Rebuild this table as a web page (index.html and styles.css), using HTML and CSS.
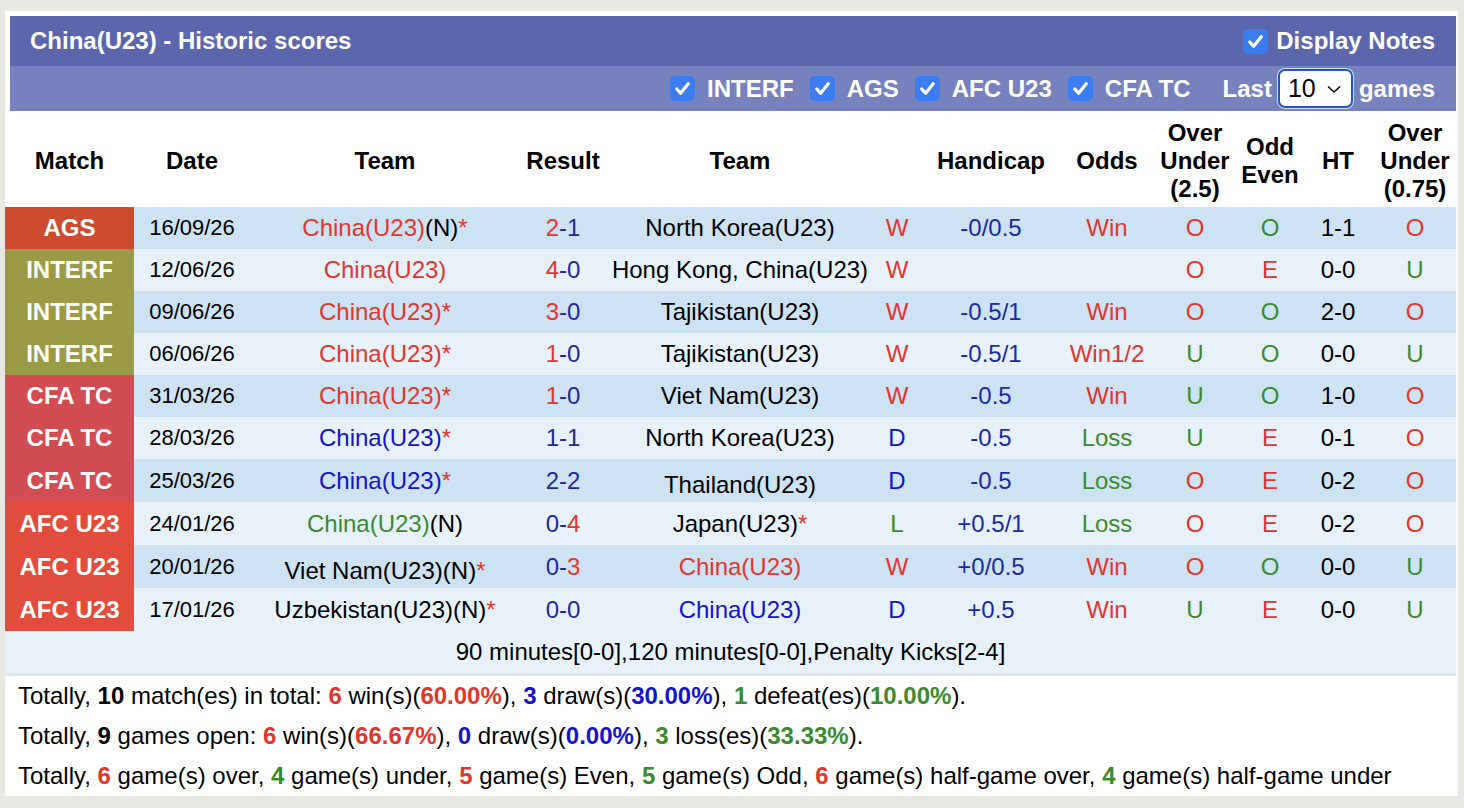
FILE: index.html
```html
<!DOCTYPE html>
<html>
<head>
<meta charset="utf-8">
<link rel="stylesheet" href="styles.css">
</head>
<body>
<div class="frame">
  <div class="titlebar">
    <span class="title">China(U23) - Historic scores</span>
    <label class="opt"><span class="cb"><svg viewBox="0 0 24 24"><path d="M6 12.5l4 4.5 8-10" /></svg></span>Display Notes</label>
  </div>
  <div class="filterbar">
    <label class="opt"><span class="cb"><svg viewBox="0 0 24 24"><path d="M6 12.5l4 4.5 8-10" /></svg></span>INTERF</label>
    <label class="opt"><span class="cb"><svg viewBox="0 0 24 24"><path d="M6 12.5l4 4.5 8-10" /></svg></span>AGS</label>
    <label class="opt"><span class="cb"><svg viewBox="0 0 24 24"><path d="M6 12.5l4 4.5 8-10" /></svg></span>AFC U23</label>
    <label class="opt"><span class="cb"><svg viewBox="0 0 24 24"><path d="M6 12.5l4 4.5 8-10" /></svg></span>CFA TC</label>
    <span class="last">Last</span>
    <span class="select">10<svg viewBox="0 0 16 10"><path d="M2 2.5l6 5.5 6-5.5" /></svg></span>
    <span class="games">games</span>
  </div>
  <table class="scores">
    <colgroup>
      <col class="c-match"><col class="c-date"><col class="c-team"><col class="c-res"><col class="c-team2"><col class="c-wl"><col class="c-hc"><col class="c-odds"><col class="c-ou"><col class="c-oe"><col class="c-ht"><col class="c-ou2">
    </colgroup>
    <thead>
      <tr>
        <th>Match</th><th>Date</th><th>Team</th><th>Result</th><th>Team</th><th></th><th>Handicap</th><th>Odds</th><th>Over<br>Under<br>(2.5)</th><th>Odd<br>Even</th><th>HT</th><th>Over<br>Under<br>(0.75)</th>
      </tr>
    </thead>
    <tbody>
      <tr class="dark">
        <td class="lg ags">AGS</td><td class="dt">16/09/26</td><td><span class="r">China(U23)</span>(N)<span class="r">*</span></td><td class="b"><span class="r">2</span>-1</td><td>North Korea(U23)</td><td class="r">W</td><td class="hb">-0/0.5</td><td class="r">Win</td><td class="r">O</td><td class="g">O</td><td>1-1</td><td class="r">O</td>
      </tr>
      <tr class="light">
        <td class="lg interf">INTERF</td><td class="dt">12/06/26</td><td><span class="r">China(U23)</span></td><td class="b"><span class="r">4</span>-0</td><td>Hong Kong, China(U23)</td><td class="r">W</td><td></td><td></td><td class="r">O</td><td class="r">E</td><td>0-0</td><td class="g">U</td>
      </tr>
      <tr class="dark">
        <td class="lg interf">INTERF</td><td class="dt">09/06/26</td><td><span class="r">China(U23)*</span></td><td class="b"><span class="r">3</span>-0</td><td>Tajikistan(U23)</td><td class="r">W</td><td class="hb">-0.5/1</td><td class="r">Win</td><td class="r">O</td><td class="g">O</td><td>2-0</td><td class="r">O</td>
      </tr>
      <tr class="light">
        <td class="lg interf">INTERF</td><td class="dt">06/06/26</td><td><span class="r">China(U23)*</span></td><td class="b"><span class="r">1</span>-0</td><td>Tajikistan(U23)</td><td class="r">W</td><td class="hb">-0.5/1</td><td class="r">Win1/2</td><td class="g">U</td><td class="g">O</td><td>0-0</td><td class="g">U</td>
      </tr>
      <tr class="dark">
        <td class="lg cfa">CFA TC</td><td class="dt">31/03/26</td><td><span class="r">China(U23)*</span></td><td class="b"><span class="r">1</span>-0</td><td>Viet Nam(U23)</td><td class="r">W</td><td class="hb">-0.5</td><td class="r">Win</td><td class="g">U</td><td class="g">O</td><td>1-0</td><td class="r">O</td>
      </tr>
      <tr class="light">
        <td class="lg cfa">CFA TC</td><td class="dt">28/03/26</td><td><span class="bl">China(U23)</span><span class="r">*</span></td><td class="b">1-1</td><td>North Korea(U23)</td><td class="bl">D</td><td class="hb">-0.5</td><td class="g">Loss</td><td class="g">U</td><td class="r">E</td><td>0-1</td><td class="r">O</td>
      </tr>
      <tr class="dark tall">
        <td class="lg cfa">CFA TC</td><td class="dt">25/03/26</td><td><span class="bl">China(U23)</span><span class="r">*</span></td><td class="b">2-2</td><td class="low">Thailand(U23)</td><td class="bl">D</td><td class="hb">-0.5</td><td class="g">Loss</td><td class="r">O</td><td class="r">E</td><td>0-2</td><td class="r">O</td>
      </tr>
      <tr class="light tall">
        <td class="lg afc">AFC U23</td><td class="dt">24/01/26</td><td><span class="g">China(U23)</span>(N)</td><td class="b">0-<span class="r">4</span></td><td>Japan(U23)<span class="r">*</span></td><td class="g">L</td><td class="hb">+0.5/1</td><td class="g">Loss</td><td class="r">O</td><td class="r">E</td><td>0-2</td><td class="r">O</td>
      </tr>
      <tr class="dark tall">
        <td class="lg afc">AFC U23</td><td class="dt">20/01/26</td><td class="low">Viet Nam(U23)(N)<span class="r">*</span></td><td class="b">0-<span class="r">3</span></td><td><span class="r">China(U23)</span></td><td class="r">W</td><td class="hb">+0/0.5</td><td class="r">Win</td><td class="r">O</td><td class="g">O</td><td>0-0</td><td class="g">U</td>
      </tr>
      <tr class="light tall">
        <td class="lg afc">AFC U23</td><td class="dt">17/01/26</td><td>Uzbekistan(U23)(N)<span class="r">*</span></td><td class="b">0-0</td><td><span class="bl">China(U23)</span></td><td class="bl">D</td><td class="hb">+0.5</td><td class="r">Win</td><td class="g">U</td><td class="r">E</td><td>0-0</td><td class="g">U</td>
      </tr>
      <tr class="light">
        <td colspan="12" class="note">90 minutes[0-0],120 minutes[0-0],Penalty Kicks[2-4]</td>
      </tr>
    </tbody>
  </table>
  <div class="stats">
    <p>Totally, <b>10</b> match(es) in total: <b class="r">6</b> win(s)(<b class="r">60.00%</b>), <b class="bl">3</b> draw(s)(<b class="bl">30.00%</b>), <b class="g">1</b> defeat(es)(<b class="g">10.00%</b>).</p>
    <p>Totally, <b>9</b> games open: <b class="r">6</b> win(s)(<b class="r">66.67%</b>), <b class="bl">0</b> draw(s)(<b class="bl">0.00%</b>), <b class="g">3</b> loss(es)(<b class="g">33.33%</b>).</p>
    <p>Totally, <b class="r">6</b> game(s) over, <b class="g">4</b> game(s) under, <b class="r">5</b> game(s) Even, <b class="g">5</b> game(s) Odd, <b class="r">6</b> game(s) half-game over, <b class="g">4</b> game(s) half-game under</p>
  </div>
</div>
</body>
</html>
```

FILE: styles.css
```css
html, body {
  margin: 0;
  padding: 0;
}
body {
  background: #e9e9e4;
  font-family: "Liberation Sans", Arial, sans-serif;
  font-size: 24px;
  color: #000;
  width: 1464px;
  height: 808px;
  overflow: hidden;
}
.frame {
  margin: 11px 0 0 5px;
  width: 1451px;
  padding: 5px 2px 0 0;
  background: #fff;
}
.titlebar {
  margin-left: 5px;
  height: 50px;
  background: #5a67ad;
  color: #fff;
  display: flex;
  align-items: center;
  justify-content: space-between;
  padding: 0 21px 0 20px;
  font-weight: bold;
}
.title {
  font-size: 24px;
}
.opt {
  display: flex;
  align-items: center;
  gap: 8px;
  font-weight: bold;
  font-size: 24px;
}
.cb {
  width: 25px;
  height: 25px;
  border-radius: 5px;
  background: #3b7cf0;
  display: inline-flex;
  align-items: center;
  justify-content: center;
}
.cb svg {
  width: 23px;
  height: 23px;
  fill: none;
  stroke: #fff;
  stroke-width: 3.4;
  stroke-linecap: round;
  stroke-linejoin: round;
}
.filterbar {
  margin-left: 5px;
  height: 45px;
  background: #7682bd;
  color: #fff;
  display: flex;
  align-items: center;
  justify-content: flex-end;
  padding-right: 21px;
  font-weight: bold;
  font-size: 24px;
}
.filterbar .opt {
  margin-left: 16px;
  gap: 12px;
}
.last {
  margin-left: 32px;
}
.select {
  margin-left: 6px;
  box-sizing: border-box;
  width: 75px;
  height: 39px;
  border: 2px solid #2158c0;
  box-shadow: 0 0 0 1px #cfdcf4;
  border-radius: 7px;
  background: #fff;
  color: #000;
  font-weight: normal;
  font-size: 25px;
  display: inline-flex;
  align-items: center;
  padding-left: 8px;
  gap: 10px;
}
.select svg {
  width: 16px;
  height: 10px;
  fill: none;
  stroke: #000;
  stroke-width: 1.5;
}
.games {
  margin-left: 6px;
}
.scores {
  width: 1451px;
  border-collapse: collapse;
  table-layout: fixed;
}
.c-match { width: 129px; }
.c-date { width: 116px; }
.c-team { width: 270px; }
.c-res { width: 86px; }
.c-team2 { width: 268px; }
.c-wl { width: 46px; }
.c-hc { width: 142px; }
.c-odds { width: 90px; }
.c-ou { width: 86px; }
.c-oe { width: 64px; }
.c-ht { width: 72px; }
.c-ou2 { width: 82px; }
.scores th {
  height: 92px;
  padding: 4px 0 0;
  font-size: 24px;
  line-height: 28px;
  font-weight: bold;
  text-align: center;
  vertical-align: middle;
  background: #fff;
}
.scores td {
  height: 42px;
  padding: 0;
  text-align: center;
  vertical-align: middle;
  white-space: nowrap;
  line-height: 26px;
}
.scores tr.tall td {
  height: 43px;
}
.scores tr.tall td.low {
  padding-top: 8px;
  height: 35px;
}
.scores td.dt {
  font-size: 22px;
}
tr.dark td { background: #cde2f3; }
tr.light td { background: #e7f1fa; }
.scores td.lg {
  color: #fff;
  font-weight: bold;
  font-size: 24px;
}
.scores td.ags { background: #cd4b2f; }
.scores td.interf { background: #9b9a47; }
.scores td.cfa { background: #d24d53; }
.scores td.afc { background: #e24c3c; }
.r { color: #e1362d; }
.b { color: #1b2aa0; }
.bl { color: #1414cc; }
.hb { color: #1b2aa5; }
.g { color: #3b8a2f; }
.stats {
  border-top: 3px solid #e6e6e6;
  padding: 0 0 0 13px;
  height: 120px;
}
.stats p {
  margin: 0;
  line-height: 40px;
  white-space: nowrap;
}
```
